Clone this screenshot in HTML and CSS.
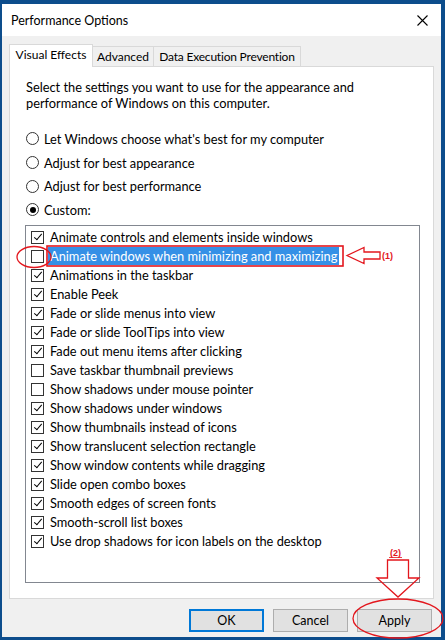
FILE: index.html
```html
<!DOCTYPE html>
<html lang="en">

<head>
    <meta charset="UTF-8">
    <meta name="viewport" content="width=device-width, initial-scale=1.0">
    <title>Performance Options</title>
    <link rel="stylesheet" href="styles.css">
</head>

<body>
    <div class="window">
        <div class="titlebar">
            <span class="title">Performance Options</span>
            <svg class="close" width="11" height="11" viewBox="0 0 11 11">
                <path d="M0.5 0.5 L10.5 10.5 M10.5 0.5 L0.5 10.5" stroke="#000" stroke-width="1.1" fill="none"/>
            </svg>
        </div>

        <div class="client">
            <div class="tabs">
                <div class="tab active tab-visual">Visual Effects</div>
                <div class="tab tab-advanced">Advanced</div>
                <div class="tab tab-dep">Data Execution Prevention</div>
            </div>

            <div class="panel">
                <p class="intro">Select the settings you want to use for the appearance and<br>performance of Windows on this computer.</p>

                <div class="radios">
                    <div class="radio"><span class="dot"></span>Let Windows choose what's best for my computer</div>
                    <div class="radio"><span class="dot"></span>Adjust for best appearance</div>
                    <div class="radio"><span class="dot"></span>Adjust for best performance</div>
                    <div class="radio"><span class="dot on"></span>Custom:</div>
                </div>

                <div class="listbox">
                    <div class="item"><span class="check on"></span><span class="text">Animate controls and elements inside windows</span></div>
                    <div class="item"><span class="check"></span><span class="text selected">Animate windows when minimizing and maximizing</span></div>
                    <div class="item"><span class="check on"></span><span class="text">Animations in the taskbar</span></div>
                    <div class="item"><span class="check on"></span><span class="text">Enable Peek</span></div>
                    <div class="item"><span class="check on"></span><span class="text">Fade or slide menus into view</span></div>
                    <div class="item"><span class="check on"></span><span class="text">Fade or slide ToolTips into view</span></div>
                    <div class="item"><span class="check on"></span><span class="text">Fade out menu items after clicking</span></div>
                    <div class="item"><span class="check"></span><span class="text">Save taskbar thumbnail previews</span></div>
                    <div class="item"><span class="check"></span><span class="text">Show shadows under mouse pointer</span></div>
                    <div class="item"><span class="check on"></span><span class="text">Show shadows under windows</span></div>
                    <div class="item"><span class="check on"></span><span class="text">Show thumbnails instead of icons</span></div>
                    <div class="item"><span class="check on"></span><span class="text">Show translucent selection rectangle</span></div>
                    <div class="item"><span class="check on"></span><span class="text">Show window contents while dragging</span></div>
                    <div class="item"><span class="check on"></span><span class="text">Slide open combo boxes</span></div>
                    <div class="item"><span class="check on"></span><span class="text">Smooth edges of screen fonts</span></div>
                    <div class="item"><span class="check on"></span><span class="text">Smooth-scroll list boxes</span></div>
                    <div class="item"><span class="check on"></span><span class="text">Use drop shadows for icon labels on the desktop</span></div>
                </div>
            </div>

            <div class="buttons">
                <button class="btn default">OK</button>
                <button class="btn">Cancel</button>
                <button class="btn">Apply</button>
            </div>
        </div>
    </div>

    <!-- red annotations drawn on top of the screenshot -->
    <svg class="marks" width="445" height="640" viewBox="0 0 445 640">
        <g fill="none" stroke="#e3161d" stroke-width="1.3">
            <rect x="47" y="246" width="296" height="20" stroke-width="1.6"/>
            <ellipse cx="34" cy="257" rx="17" ry="10.5"/>
            <path d="M347 255.5 L364 247.5 L364 252 L380 252 L380 259 L364 259 L364 263.5 Z"/>
            <path d="M387.5 560 L408.5 560 L408.5 578 L419 578 L398 597 L377 578 L387.5 578 Z"/>
            <ellipse cx="398" cy="618.5" rx="45" ry="19.5"/>
        </g>
        <g fill="#e3161d" font-family="'Liberation Sans', sans-serif" font-size="9" font-weight="bold">
            <text x="382" y="259">(1)</text>
            <text x="390" y="556">(2)</text>
        </g>
        <path d="M389 557.5 L402 557.5" stroke="#e3161d" stroke-width="0.8"/>
    </svg>
</body>

</html>
```

FILE: styles.css
```css
body {
    margin: 0;
    width: 445px;
    height: 640px;
    background: #0d4d8c;
    font-family: Lato, 'Noto Sans', sans-serif;
    font-size: 12px;
    color: #000;
    position: relative;
    overflow: hidden;
}

.window {
    margin: 4px 4px 3px 2px;
    height: 633px;
    background: #f0f0f0;
    display: flex;
    flex-direction: column;
}

.titlebar {
    height: 32px;
    background: #fff;
    display: flex;
    align-items: center;
    justify-content: space-between;
    padding: 0 13px 0 9px;
}

.title {
    font-size: 12.5px;
}

.client {
    flex: 1;
    padding: 8px 7px 0 7px;
    display: flex;
    flex-direction: column;
}

/* tab strip */
.tabs {
    display: flex;
    align-items: flex-end;
    height: 22px;
}

.tab {
    box-sizing: border-box;
    height: 20px;
    line-height: 20px;
    text-align: center;
    border: 1px solid #d9d9d9;
    border-bottom: none;
    background: #f0f0f0;
    margin-left: -1px;
    white-space: nowrap;
}

.tab.active {
    height: 23px;
    line-height: 20px;
    background: #fff;
    margin-left: 0;
    margin-bottom: -1px;
    position: relative;
    z-index: 1;
}

.tab-visual {
    width: 84px;
}

.tab-advanced {
    width: 62px;
}

.tab-dep {
    width: 148px;
    letter-spacing: -0.2px;
}

.panel {
    height: 533px;
    box-sizing: border-box;
    border: 1px solid #d9d9d9;
    background: #fff;
    padding: 12px 0 0 16px;
    font-size: 12.8px;
}

.intro {
    margin: 0;
    line-height: 16px;
}

/* radio buttons */
.radios {
    margin-top: 16px;
}

.radio {
    height: 23.7px;
    display: flex;
    align-items: center;
}

.dot {
    box-sizing: border-box;
    width: 13px;
    height: 13px;
    border: 1px solid #333;
    border-radius: 50%;
    margin-right: 5px;
    position: relative;
}

.dot.on::after {
    content: '';
    position: absolute;
    left: 2.5px;
    top: 2.5px;
    width: 6px;
    height: 6px;
    border-radius: 50%;
    background: #000;
}

/* check list */
.listbox {
    box-sizing: border-box;
    width: 395px;
    height: 358px;
    margin: 3px 0 0 -1px;
    border: 1px solid #828790;
    padding-top: 2px;
}

.item {
    height: 19px;
    display: flex;
    align-items: center;
    padding-left: 5px;
}

.check {
    box-sizing: border-box;
    width: 13px;
    height: 13px;
    border: 1px solid #333;
    background: #fff;
    position: relative;
    flex-shrink: 0;
}

.check.on::after {
    content: '';
    position: absolute;
    left: 3.5px;
    top: 0.5px;
    width: 3px;
    height: 7px;
    border-right: 1px solid #000;
    border-bottom: 1px solid #000;
    transform: rotate(40deg);
}

.text {
    margin-left: 4px;
    padding: 0 2px;
    line-height: 18px;
}

.text.selected {
    background: #3590e6;
    color: #fff;
}

/* dialog buttons */
.buttons {
    display: flex;
    justify-content: flex-end;
    gap: 9px;
    padding: 10px 2px 0 0;
}

.btn {
    box-sizing: border-box;
    width: 75px;
    height: 23px;
    border: 1px solid #adadad;
    background: #e1e1e1;
    font-family: inherit;
    font-size: 12.5px;
    color: #000;
    padding: 0;
}

.btn.default {
    border-color: #0078d7;
    box-shadow: inset 0 0 0 1px #0078d7;
}

.marks {
    position: absolute;
    top: 0;
    left: 0;
}
```
